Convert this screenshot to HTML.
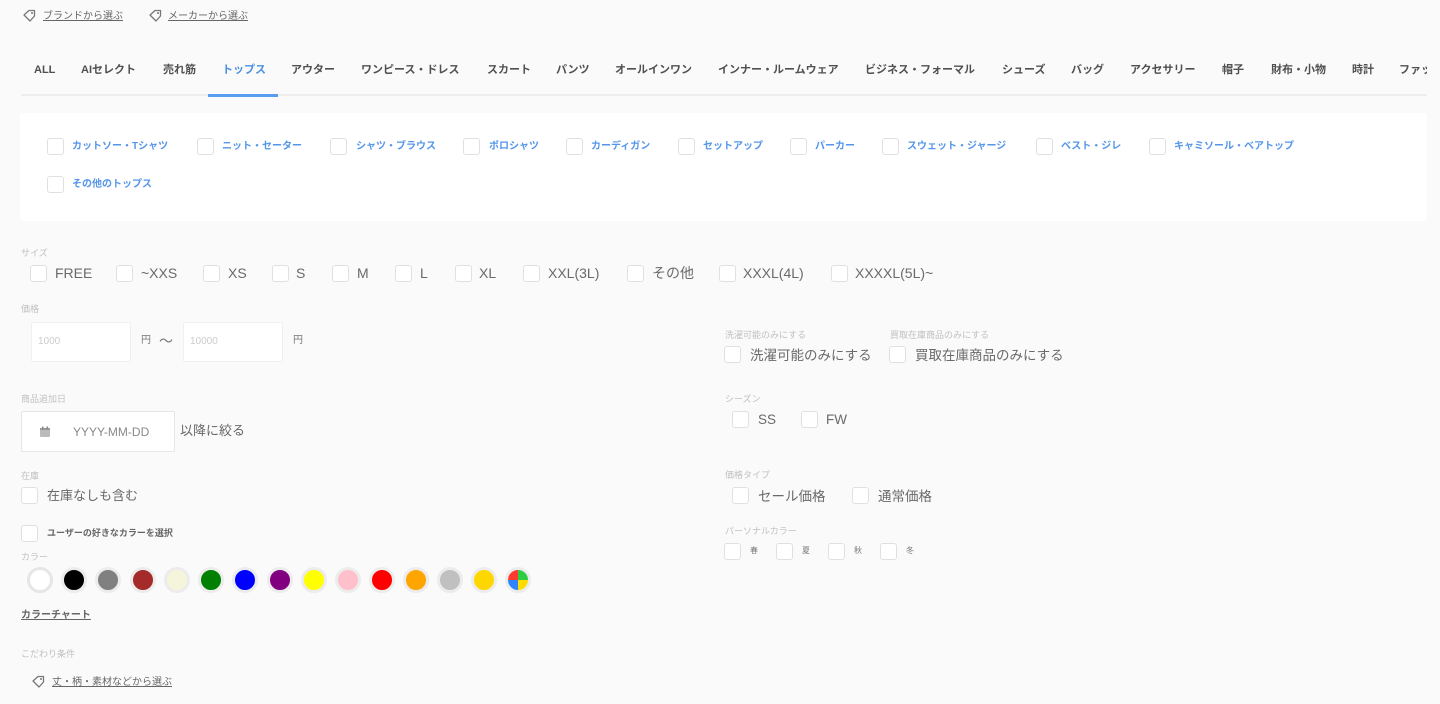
<!DOCTYPE html>
<html><head><meta charset="utf-8">
<style>
*{margin:0;padding:0;box-sizing:border-box}
body{width:1440px;height:704px;background:#fafafa;position:relative;overflow:hidden;font-family:"Liberation Sans","Noto Sans CJK JP",sans-serif;color:#555}
.a{position:absolute;white-space:nowrap;line-height:1}
.cb{position:absolute;width:17px;height:17px;border:1px solid #e0e0e0;border-radius:3px;background:#fff}
.tab{position:absolute;top:64px;font-size:11px;font-weight:bold;color:#505050;white-space:nowrap;line-height:12px}
.cat{position:absolute;font-size:10px;font-weight:bold;color:#5596ea;white-space:nowrap;line-height:11px}
.sz{position:absolute;top:266px;font-size:14px;color:#6a6a6a;line-height:15px;white-space:nowrap}
.lb{position:absolute;font-size:9px;color:#c0c0c0;line-height:10px;white-space:nowrap}
.t14{position:absolute;font-size:13.5px;color:#6a6a6a;line-height:15px;white-space:nowrap}
.dot{position:absolute;top:567px;width:26px;height:26px;border-radius:50%;border:3px solid #ececec}
.inp{position:absolute;background:#fff;border:1px solid #f0f0f0;border-radius:2px}
.lnk{position:absolute;font-size:10px;color:#666;text-decoration:underline;white-space:nowrap;line-height:11px}
</style></head><body>

<svg class="a" style="left:22px;top:9px" width="15" height="14" viewBox="0 0 15 14"><path d="M2 6 L7 1.5 H12.5 V7 L8 12 Z" fill="none" stroke="#777" stroke-width="1.3" stroke-linejoin="round"/><circle cx="10" cy="4" r="1" fill="#777"/></svg>
<div class="lnk" style="left:43px;top:11px">ブランドから選ぶ</div>
<svg class="a" style="left:148px;top:9px" width="15" height="14" viewBox="0 0 15 14"><path d="M2 6 L7 1.5 H12.5 V7 L8 12 Z" fill="none" stroke="#777" stroke-width="1.3" stroke-linejoin="round"/><circle cx="10" cy="4" r="1" fill="#777"/></svg>
<div class="lnk" style="left:168px;top:11px">メーカーから選ぶ</div>

<div class="tab" style="left:34px">ALL</div>
<div class="tab" style="left:81px">AIセレクト</div>
<div class="tab" style="left:163px">売れ筋</div>
<div class="tab" style="left:222px;color:#4a90e2">トップス</div>
<div class="tab" style="left:291px">アウター</div>
<div class="tab" style="left:361px">ワンピース・ドレス</div>
<div class="tab" style="left:487px">スカート</div>
<div class="tab" style="left:556px">パンツ</div>
<div class="tab" style="left:615px">オールインワン</div>
<div class="tab" style="left:718px">インナー・ルームウェア</div>
<div class="tab" style="left:865px">ビジネス・フォーマル</div>
<div class="tab" style="left:1002px">シューズ</div>
<div class="tab" style="left:1071px">バッグ</div>
<div class="tab" style="left:1130px">アクセサリー</div>
<div class="tab" style="left:1222px">帽子</div>
<div class="tab" style="left:1271px">財布・小物</div>
<div class="tab" style="left:1352px">時計</div>
<div class="tab" style="left:1399px;width:28px;overflow:hidden">ファッション</div>
<div class="a" style="left:21px;top:94px;width:1406px;height:2px;background:#eeeeee"></div>
<div class="a" style="left:208px;top:94px;width:70px;height:3px;background:#5b9cf0"></div>

<div class="a" style="left:20px;top:113px;width:1407px;height:108px;background:#fff;border-radius:4px"></div>
<div class="cb" style="left:47px;top:138px"></div><div class="cat" style="left:72px;top:141px">カットソー・Tシャツ</div>
<div class="cb" style="left:197px;top:138px"></div><div class="cat" style="left:222px;top:141px">ニット・セーター</div>
<div class="cb" style="left:330px;top:138px"></div><div class="cat" style="left:356px;top:141px">シャツ・ブラウス</div>
<div class="cb" style="left:463px;top:138px"></div><div class="cat" style="left:489px;top:141px">ポロシャツ</div>
<div class="cb" style="left:566px;top:138px"></div><div class="cat" style="left:591px;top:141px">カーディガン</div>
<div class="cb" style="left:678px;top:138px"></div><div class="cat" style="left:703px;top:141px">セットアップ</div>
<div class="cb" style="left:790px;top:138px"></div><div class="cat" style="left:815px;top:141px">パーカー</div>
<div class="cb" style="left:882px;top:138px"></div><div class="cat" style="left:907px;top:141px">スウェット・ジャージ</div>
<div class="cb" style="left:1036px;top:138px"></div><div class="cat" style="left:1061px;top:141px">ベスト・ジレ</div>
<div class="cb" style="left:1149px;top:138px"></div><div class="cat" style="left:1174px;top:141px">キャミソール・ベアトップ</div>
<div class="cb" style="left:47px;top:176px"></div><div class="cat" style="left:72px;top:179px">その他のトップス</div>

<div class="lb" style="left:21px;top:248px">サイズ</div>
<div class="cb" style="left:30px;top:265px"></div><div class="sz" style="left:55px">FREE</div>
<div class="cb" style="left:116px;top:265px"></div><div class="sz" style="left:141px">~XXS</div>
<div class="cb" style="left:203px;top:265px"></div><div class="sz" style="left:228px">XS</div>
<div class="cb" style="left:272px;top:265px"></div><div class="sz" style="left:296px">S</div>
<div class="cb" style="left:332px;top:265px"></div><div class="sz" style="left:357px">M</div>
<div class="cb" style="left:395px;top:265px"></div><div class="sz" style="left:420px">L</div>
<div class="cb" style="left:455px;top:265px"></div><div class="sz" style="left:479px">XL</div>
<div class="cb" style="left:523px;top:265px"></div><div class="sz" style="left:548px">XXL(3L)</div>
<div class="cb" style="left:627px;top:265px"></div><div class="sz" style="left:652px">その他</div>
<div class="cb" style="left:719px;top:265px"></div><div class="sz" style="left:743px">XXXL(4L)</div>
<div class="cb" style="left:831px;top:265px"></div><div class="sz" style="left:855px">XXXXL(5L)~</div>

<div class="lb" style="left:21px;top:304px">価格</div>
<div class="inp" style="left:31px;top:322px;width:100px;height:40px"></div>
<div class="a" style="left:38px;top:337px;font-size:10px;color:#ccc">1000</div>
<div class="a" style="left:141px;top:336px;font-size:10px;color:#777">円</div>
<div class="a" style="left:159px;top:334px;font-size:14px;color:#777">～</div>
<div class="inp" style="left:183px;top:322px;width:100px;height:40px"></div>
<div class="a" style="left:190px;top:337px;font-size:10px;color:#ccc">10000</div>
<div class="a" style="left:293px;top:336px;font-size:10px;color:#777">円</div>

<div class="lb" style="left:725px;top:330px">洗濯可能のみにする</div>
<div class="lb" style="left:890px;top:330px">買取在庫商品のみにする</div>
<div class="cb" style="left:724px;top:346px"></div><div class="t14" style="left:750px;top:348px">洗濯可能のみにする</div>
<div class="cb" style="left:889px;top:346px"></div><div class="t14" style="left:915px;top:348px">買取在庫商品のみにする</div>

<div class="lb" style="left:21px;top:394px">商品追加日</div>
<div class="inp" style="left:21px;top:411px;width:154px;height:41px;border-color:#e6e6e6"></div>
<svg class="a" style="left:39px;top:426px" width="12" height="12" viewBox="0 0 12 12"><rect x="1" y="2" width="10" height="9" rx="1" fill="#bbb"/><rect x="1" y="2" width="10" height="2" fill="#999"/><rect x="3" y="0.5" width="1.5" height="3" fill="#888"/><rect x="7.5" y="0.5" width="1.5" height="3" fill="#888"/></svg>
<div class="a" style="left:73px;top:426px;font-size:12px;color:#888">YYYY-MM-DD</div>
<div class="a" style="left:180px;top:424px;font-size:13px;color:#666">以降に絞る</div>

<div class="lb" style="left:725px;top:394px">シーズン</div>
<div class="cb" style="left:732px;top:411px"></div><div class="t14" style="left:758px;top:412px">SS</div>
<div class="cb" style="left:801px;top:411px"></div><div class="t14" style="left:826px;top:412px">FW</div>

<div class="lb" style="left:21px;top:471px">在庫</div>
<div class="cb" style="left:21px;top:487px"></div><div class="a" style="left:47px;top:489px;font-size:13px;color:#666">在庫なしも含む</div>

<div class="lb" style="left:725px;top:470px">価格タイプ</div>
<div class="cb" style="left:732px;top:487px"></div><div class="t14" style="left:758px;top:489px">セール価格</div>
<div class="cb" style="left:852px;top:487px"></div><div class="t14" style="left:878px;top:489px">通常価格</div>

<div class="cb" style="left:21px;top:525px"></div><div class="a" style="left:47px;top:529px;font-size:9px;font-weight:bold;color:#666">ユーザーの好きなカラーを選択</div>

<div class="lb" style="left:725px;top:526px">パーソナルカラー</div>
<div class="cb" style="left:724px;top:543px"></div><div class="a" style="left:750px;top:547px;font-size:8px;color:#777">春</div>
<div class="cb" style="left:776px;top:543px"></div><div class="a" style="left:802px;top:547px;font-size:8px;color:#777">夏</div>
<div class="cb" style="left:828px;top:543px"></div><div class="a" style="left:854px;top:547px;font-size:8px;color:#777">秋</div>
<div class="cb" style="left:880px;top:543px"></div><div class="a" style="left:906px;top:547px;font-size:8px;color:#777">冬</div>

<div class="lb" style="left:21px;top:552px">カラー</div>
<div class="dot" style="left:27px;background:#fff;border-color:#e6e6e6"></div>
<div class="dot" style="left:61px;background:#000"></div>
<div class="dot" style="left:95px;background:#808080"></div>
<div class="dot" style="left:130px;background:#a52a2a"></div>
<div class="dot" style="left:164px;background:#f5f5dc"></div>
<div class="dot" style="left:198px;background:#008000"></div>
<div class="dot" style="left:232px;background:#0000ff"></div>
<div class="dot" style="left:267px;background:#800080"></div>
<div class="dot" style="left:301px;background:#ffff00"></div>
<div class="dot" style="left:335px;background:#ffc0cb"></div>
<div class="dot" style="left:369px;background:#ff0000"></div>
<div class="dot" style="left:403px;background:#ffa500"></div>
<div class="dot" style="left:437px;background:#c0c0c0"></div>
<div class="dot" style="left:471px;background:#ffd700"></div>
<div class="dot" style="left:505px;background:conic-gradient(#2ecc40 0 25%,#ffdc00 25% 50%,#2e86ff 50% 75%,#ff3b30 75% 100%)"></div>

<div class="lnk" style="left:21px;top:610px;font-weight:bold">カラーチャート</div>

<div class="lb" style="left:21px;top:649px">こだわり条件</div>
<svg class="a" style="left:31px;top:675px" width="15" height="14" viewBox="0 0 15 14"><path d="M2 6 L7 1.5 H12.5 V7 L8 12 Z" fill="none" stroke="#777" stroke-width="1.3" stroke-linejoin="round"/><circle cx="10" cy="4" r="1" fill="#777"/></svg>
<div class="lnk" style="left:52px;top:677px">丈・柄・素材などから選ぶ</div>

</body></html>
